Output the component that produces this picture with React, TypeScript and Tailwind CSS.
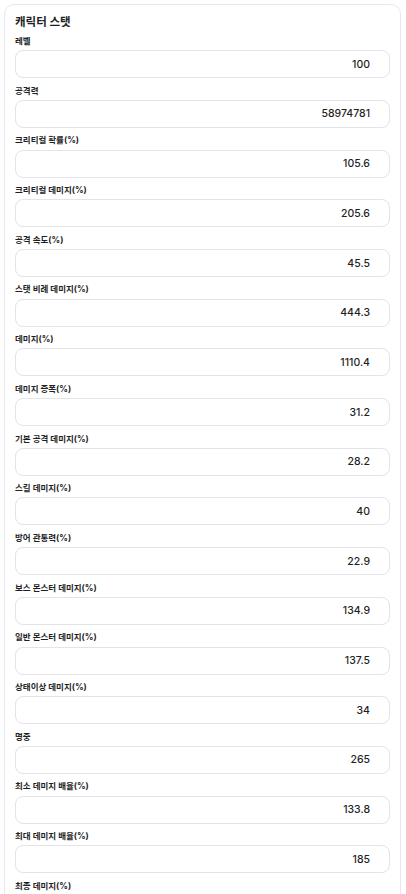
import { useState } from "react";

type Stat = { label: string; value: string };

const initialStats: Stat[] = [
  { label: "레벨", value: "100" },
  { label: "공격력", value: "58974781" },
  { label: "크리티컬 확률(%)", value: "105.6" },
  { label: "크리티컬 데미지(%)", value: "205.6" },
  { label: "공격 속도(%)", value: "45.5" },
  { label: "스탯 비례 데미지(%)", value: "444.3" },
  { label: "데미지(%)", value: "1110.4" },
  { label: "데미지 증폭(%)", value: "31.2" },
  { label: "기본 공격 데미지(%)", value: "28.2" },
  { label: "스킬 데미지(%)", value: "40" },
  { label: "방어 관통력(%)", value: "22.9" },
  { label: "보스 몬스터 데미지(%)", value: "134.9" },
  { label: "일반 몬스터 데미지(%)", value: "137.5" },
  { label: "상태이상 데미지(%)", value: "34" },
  { label: "명중", value: "265" },
  { label: "최소 데미지 배율(%)", value: "133.8" },
  { label: "최대 데미지 배율(%)", value: "185" },
  { label: "최종 데미지(%)", value: "0" },
];

const App = () => {
  const [stats, setStats] = useState<Stat[]>(initialStats);

  const update = (idx: number, value: string) => {
    setStats(stats.map((s, i) => (i === idx ? { ...s, value } : s)));
  };

  return (
    <div className="min-h-screen bg-white pl-[4px] pr-[5px] pt-[4px] font-['Inter','Noto_Sans_CJK_KR',sans-serif] text-[#1f1f1f]">
      <div className="rounded-[10px] border border-[#e8e8ec] bg-white px-[10px] pt-[9px] pb-4">
        <h2 className="text-[11.5px] font-bold leading-[16px]">캐릭터 스탯</h2>

        <div className="mt-[4px] flex flex-col gap-[5.4px]">
          {stats.map((stat, idx) => (
            <div key={stat.label} className="flex flex-col">
              <label className="text-[8.5px] font-bold leading-[14px]">{stat.label}</label>
              <input
                value={stat.value}
                onChange={(e) => update(idx, e.target.value)}
                className="mt-[2.3px] h-[28px] w-full rounded-lg border border-[#e3e3e8] bg-white pr-[19px] text-right text-[10.5px] font-medium text-[#1f1f1f] outline-none"
              />
            </div>
          ))}
        </div>
      </div>
    </div>
  );
};

export default App;
